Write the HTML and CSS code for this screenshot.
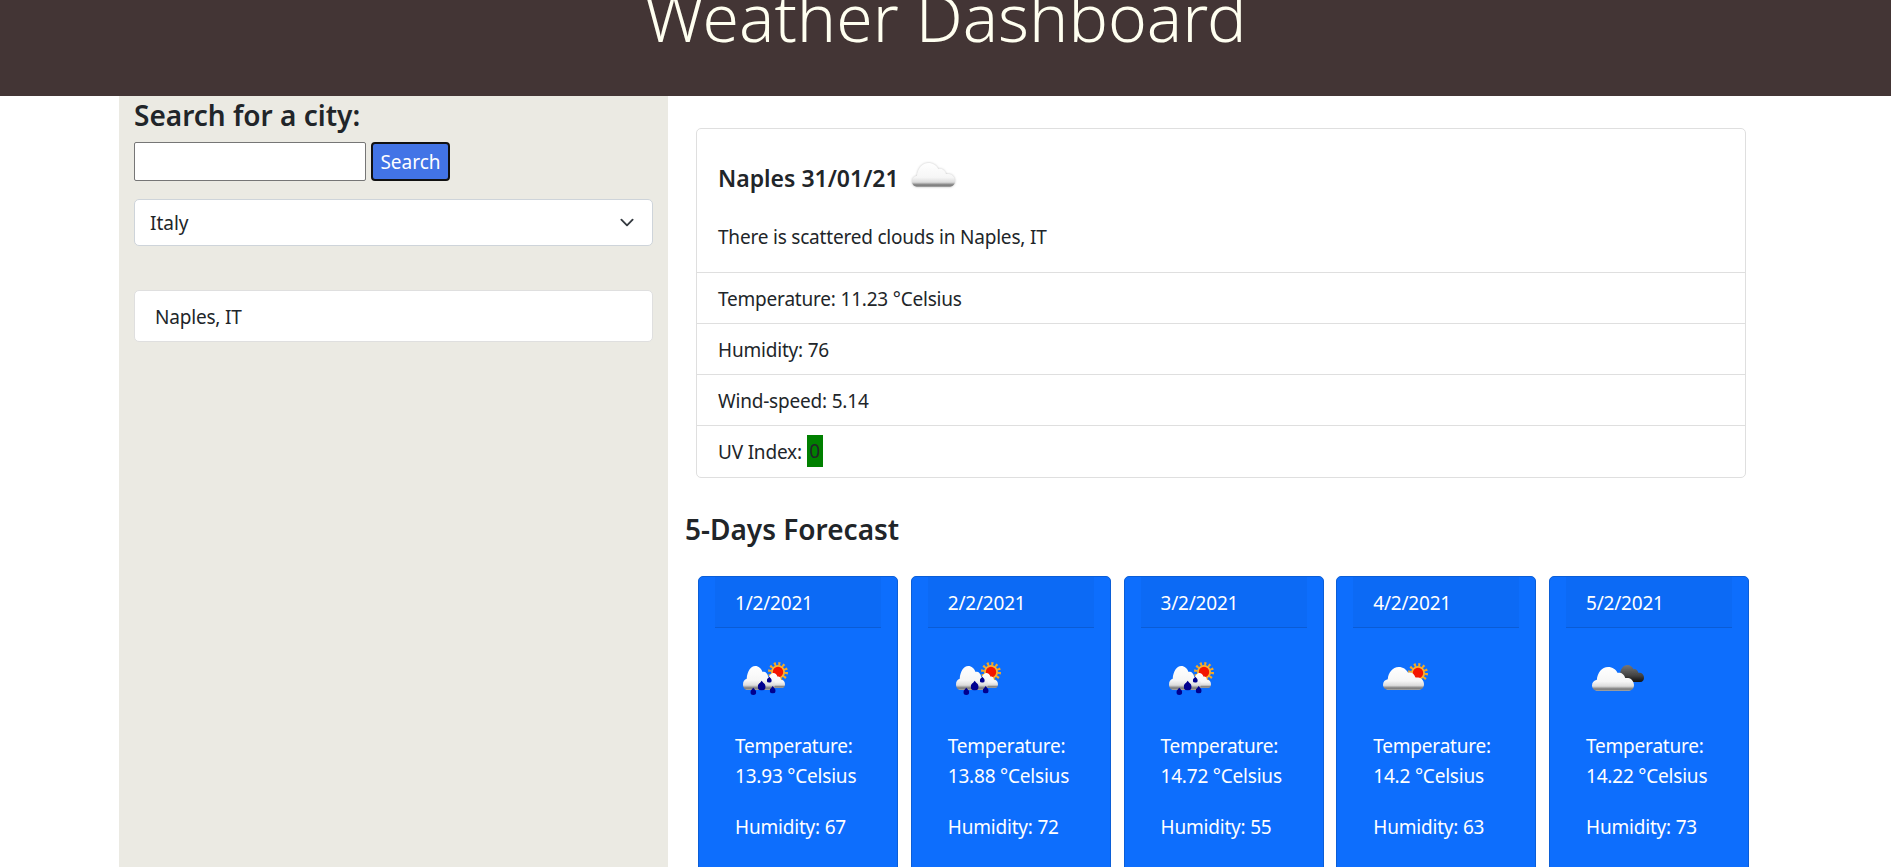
FILE: index.html
```html
<!DOCTYPE html>
<html lang="en">
<head>
    <meta charset="UTF-8">
    <meta name="viewport" content="width=device-width, initial-scale=1.0">
    <title>Weather Dashboard</title>
    <link rel="stylesheet" href="styles.css">
</head>
<body>
    <svg class="icon-defs" aria-hidden="true">
        <defs>
            <linearGradient id="cloudFill" x1="0" y1="0" x2="0" y2="1">
                <stop offset="0" stop-color="#ffffff"/>
                <stop offset="0.6" stop-color="#f6f6f6"/>
                <stop offset="0.8" stop-color="#dcdcdc"/>
                <stop offset="0.92" stop-color="#777777"/>
                <stop offset="1" stop-color="#a8a8a8"/>
            </linearGradient>
            <linearGradient id="darkFill" x1="0" y1="0" x2="0" y2="1">
                <stop offset="0" stop-color="#777777"/>
                <stop offset="0.6" stop-color="#444444"/>
                <stop offset="1" stop-color="#111111"/>
            </linearGradient>
            <filter id="soft" x="-10%" y="-10%" width="120%" height="120%">
                <feGaussianBlur stdDeviation="0.45"/>
            </filter>
            <filter id="halo" x="-15%" y="-20%" width="130%" height="140%">
                <feDropShadow dx="0" dy="0" stdDeviation="1.1" flood-color="#a0a0a0" flood-opacity="0.7"/>
                <feGaussianBlur stdDeviation="0.4"/>
            </filter>
            <symbol id="cloud" viewBox="0 0 43 24" preserveAspectRatio="none" overflow="visible">
                <path fill="url(#cloudFill)" d="M6 24C2.5 24 0 21.5 0 18.5C0 15.5 2 13.3 5 12.8C5.5 6 10 0 16.5 0C21 0 24.5 2.5 26.3 6C29.5 5 33 7 34 11C35 11 36 11 37 11C40.5 11.5 43 14.5 43 18C43 21.5 40.5 24 37 24Z"/>
            </symbol>
            <symbol id="darkcloud" viewBox="0 0 43 24" preserveAspectRatio="none" overflow="visible">
                <path fill="url(#darkFill)" d="M6 24C2.5 24 0 21.5 0 18.5C0 15.5 2 13.3 5 12.8C5.5 6 10 0 16.5 0C21 0 24.5 2.5 26.3 6C29.5 5 33 7 34 11C35 11 36 11 37 11C40.5 11.5 43 14.5 43 18C43 21.5 40.5 24 37 24Z"/>
            </symbol>
            <symbol id="sun" viewBox="-12 -12 24 24">
                <circle r="8.2" fill="none" stroke="#f7a823" stroke-width="3.6" stroke-dasharray="2 2.3"/>
                <circle r="7" fill="#f9b233"/>
                <circle r="5.2" fill="#f31500"/>
            </symbol>
            <symbol id="drop" viewBox="0 0 10 12.5">
                <path fill="#00008f" d="M5 0C6 2.5 10 4.5 10 7.5A5 5 0 0 1 0 7.5C0 4.5 4 2.5 5 0Z"/>
            </symbol>
            <symbol id="rainy" viewBox="0 0 70 60">
                <g filter="url(#soft)">
                    <use href="#sun" x="36" y="10" width="24" height="24"/>
                    <use href="#cloud" x="36" y="23" width="19" height="15"/>
                    <use href="#cloud" x="13" y="16" width="32" height="24"/>
                    <use href="#drop" x="20.3" y="37.5" width="6" height="7.5"/>
                    <use href="#drop" x="27.7" y="30.5" width="8" height="10"/>
                    <use href="#drop" x="39.7" y="36" width="6" height="7.5"/>
                    <use href="#drop" x="36.8" y="26.5" width="5" height="6.25"/>
                </g>
            </symbol>
        </defs>
    </svg>

    <header class="site-header">
        <h1>Weather Dashboard</h1>
    </header>

    <div class="page">
        <aside class="sidebar">
            <h2>Search for a city:</h2>
            <form class="search-form">
                <input type="text" class="search-input">
                <button type="button" class="search-btn">Search</button>
            </form>
            <select class="country-select">
                <option>Italy</option>
            </select>
            <div class="city-item">Naples, IT</div>
        </aside>

        <main class="content">
            <section class="today">
                <div class="today-body">
                    <div class="today-title">
                        <h3>Naples 31/01/21</h3>
                        <svg class="today-icon" width="43" height="30" viewBox="0 0 43 30">
                            <g filter="url(#halo)">
                                <use href="#cloud" x="0" y="0" width="43" height="24"/>
                            </g>
                        </svg>
                    </div>
                    <p>There is scattered clouds in Naples, IT</p>
                </div>
                <ul class="today-list">
                    <li>Temperature: 11.23 °Celsius</li>
                    <li>Humidity: 76</li>
                    <li>Wind-speed: 5.14</li>
                    <li>UV Index: <span class="uv">0</span></li>
                </ul>
            </section>

            <h2 class="forecast-title">5-Days Forecast</h2>

            <div class="forecast">
                <div class="day">
                    <div class="day-header">1/2/2021</div>
                    <div class="day-body">
                        <svg class="day-icon" width="70" height="60"><use href="#rainy"/></svg>
                        <p>Temperature: 13.93 °Celsius</p>
                        <p>Humidity: 67</p>
                    </div>
                </div>
                <div class="day">
                    <div class="day-header">2/2/2021</div>
                    <div class="day-body">
                        <svg class="day-icon" width="70" height="60"><use href="#rainy"/></svg>
                        <p>Temperature: 13.88 °Celsius</p>
                        <p>Humidity: 72</p>
                    </div>
                </div>
                <div class="day">
                    <div class="day-header">3/2/2021</div>
                    <div class="day-body">
                        <svg class="day-icon" width="70" height="60"><use href="#rainy"/></svg>
                        <p>Temperature: 14.72 °Celsius</p>
                        <p>Humidity: 55</p>
                    </div>
                </div>
                <div class="day">
                    <div class="day-header">4/2/2021</div>
                    <div class="day-body">
                        <svg class="day-icon" width="70" height="60" viewBox="0 0 70 60">
                            <g filter="url(#soft)">
                                <use href="#sun" x="38" y="11" width="24" height="24"/>
                                <use href="#cloud" x="15" y="17" width="41" height="23"/>
                            </g>
                        </svg>
                        <p>Temperature: 14.2 °Celsius</p>
                        <p>Humidity: 63</p>
                    </div>
                </div>
                <div class="day">
                    <div class="day-header">5/2/2021</div>
                    <div class="day-body">
                        <svg class="day-icon" width="70" height="60" viewBox="0 0 70 60">
                            <g filter="url(#soft)">
                                <use href="#darkcloud" x="36" y="15" width="27" height="17"/>
                                <use href="#cloud" x="11" y="17" width="42" height="24"/>
                            </g>
                        </svg>
                        <p>Temperature: 14.22 °Celsius</p>
                        <p>Humidity: 73</p>
                    </div>
                </div>
            </div>
        </main>
    </div>
</body>
</html>
```

FILE: styles.css
```css
html, body {
    height: 867px;
    overflow: hidden;
}
body {
    margin: 0;
    font-family: "Noto Sans", "Open Sans", Arial, sans-serif;
    font-size: 19px;
    line-height: 30px;
    letter-spacing: -0.2px;
    color: #212529;
    background-color: #fff;
}
.icon-defs {
    position: absolute;
    width: 0;
    height: 0;
}

.site-header {
    height: 96px;
    overflow: hidden;
    background-color: #433535;
    color: #fffff0;
    text-align: center;
}
.site-header h1 {
    margin: -26px 0 0;
    font-size: 66px;
    font-weight: 300;
    letter-spacing: 0;
    line-height: 84px;
}

.page {
    display: flex;
    margin: 0 119px;
    height: 771px;
}

.sidebar {
    box-sizing: border-box;
    width: 549px;
    padding: 0 15px;
    background-color: #ebeae3;
}
.sidebar h2 {
    margin: 0 0 8px;
    font-size: 28px;
    font-weight: 600;
    letter-spacing: 0;
    line-height: 38px;
}
.search-form {
    display: flex;
    gap: 5px;
}
.search-input {
    box-sizing: border-box;
    width: 232px;
    height: 39px;
    border: 1px solid #767676;
    border-radius: 2px;
    background-color: #fff;
}
.search-btn {
    box-sizing: border-box;
    width: 79px;
    height: 39px;
    padding: 0;
    border: 2px solid #111;
    border-radius: 4px;
    background-color: #4274e6;
    color: #fff;
    font-family: inherit;
    font-size: 19px;
}
.country-select {
    display: block;
    box-sizing: border-box;
    width: 100%;
    height: 47px;
    margin-top: 18px;
    padding: 0 50px 0 15px;
    border: 1px solid #ced4da;
    border-radius: 5px;
    background-color: #fff;
    background-image: url("data:image/svg+xml,%3csvg xmlns='http://www.w3.org/2000/svg' viewBox='0 0 16 16'%3e%3cpath fill='none' stroke='%23343a40' stroke-linecap='round' stroke-linejoin='round' stroke-width='2' d='M2 5l6 6 6-6'/%3e%3c/svg%3e");
    background-repeat: no-repeat;
    background-position: right 15px center;
    background-size: 20px 15px;
    color: #212529;
    font-family: inherit;
    font-size: 19px;
    appearance: none;
}
.city-item {
    box-sizing: border-box;
    height: 52px;
    margin-top: 44px;
    padding: 11px 20px 9px;
    border: 1px solid #dfdfdf;
    border-radius: 5px;
    background-color: #fff;
}

.content {
    flex: 1;
    min-width: 0;
}

.today {
    box-sizing: border-box;
    height: 350px;
    margin: 32px 26px 0 28px;
    border: 1px solid #dfdfdf;
    border-radius: 5px;
}
.today-body {
    box-sizing: border-box;
    height: 143px;
    padding: 31px 21px 0;
}
.today-title {
    display: flex;
    align-items: center;
    height: 36px;
}
.today-title h3 {
    margin: 0;
    font-size: 23px;
    font-weight: 600;
    letter-spacing: 0;
    line-height: 36px;
}
.today-icon {
    margin-left: 13px;
    overflow: visible;
}
.today-body p {
    margin: 26px 0 0;
}
.today-list {
    margin: 0;
    padding: 0;
    list-style: none;
}
.today-list li {
    box-sizing: border-box;
    height: 51px;
    padding: 11px 21px 9px;
    border-top: 1px solid #dfdfdf;
}
.uv {
    display: inline-block;
    width: 16px;
    height: 32px;
    margin-top: -2px;
    background-color: #008000;
    line-height: 32px;
    text-align: center;
    vertical-align: top;
}

.forecast-title {
    margin: 33px 0 29px 17px;
    font-size: 28px;
    font-weight: 600;
    letter-spacing: 0;
    line-height: 36px;
}

.forecast {
    display: flex;
    gap: 12.75px;
    margin: 0 23px 0 30px;
}
.day {
    flex: 1;
    box-sizing: border-box;
    min-height: 320px;
    padding: 0 16px;
    border: 1px solid #0b5ed7;
    border-radius: 5px;
    background-color: #0d6efd;
    color: #fff;
}
.day-header {
    height: 51px;
    padding: 11px 20px 9px;
    box-sizing: border-box;
    border-bottom: 1px solid rgba(0, 0, 0, 0.125);
    background-color: rgba(0, 0, 0, 0.03);
}
.day-body {
    padding: 23px 0 0 20px;
}
.day-icon {
    display: block;
    margin: -1px 0 21px -5px;
}
.day-body p {
    margin: 0 0 21px;
}
```
